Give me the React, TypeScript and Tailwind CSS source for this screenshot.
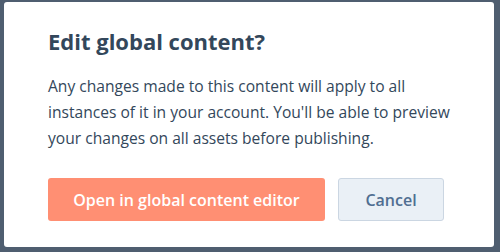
export default function App() {
  return (
    <div className="w-[500px] h-[252px] bg-[#4f5e70] pt-[2px] pl-[4px] overflow-hidden" style={{ fontFamily: '"Open Sans", sans-serif' }}>
      <div className="w-[490px] h-[245px] bg-white rounded-[3px] px-[44px] pt-[23px]">
        <h1 className="text-[22px] leading-[32px] font-bold text-[#33475b]">Edit global content?</h1>
        <p className="mt-[16px] text-[15.6px] leading-[26px] text-[#33475b]">
          Any changes made to this content will apply to all instances of it in your account. You'll be able to preview your changes on all assets before publishing.
        </p>
        <div className="mt-[27px] flex gap-[13px]">
          <button className="w-[277px] h-[43px] rounded-[3px] bg-[#ff8f73] text-white text-[16px] font-semibold">
            Open in global content editor
          </button>
          <button className="w-[106px] h-[43px] rounded-[3px] bg-[#eaf0f6] border border-[#cbd6e2] text-[#506e91] text-[16px] font-semibold">
            Cancel
          </button>
        </div>
      </div>
    </div>
  );
}
